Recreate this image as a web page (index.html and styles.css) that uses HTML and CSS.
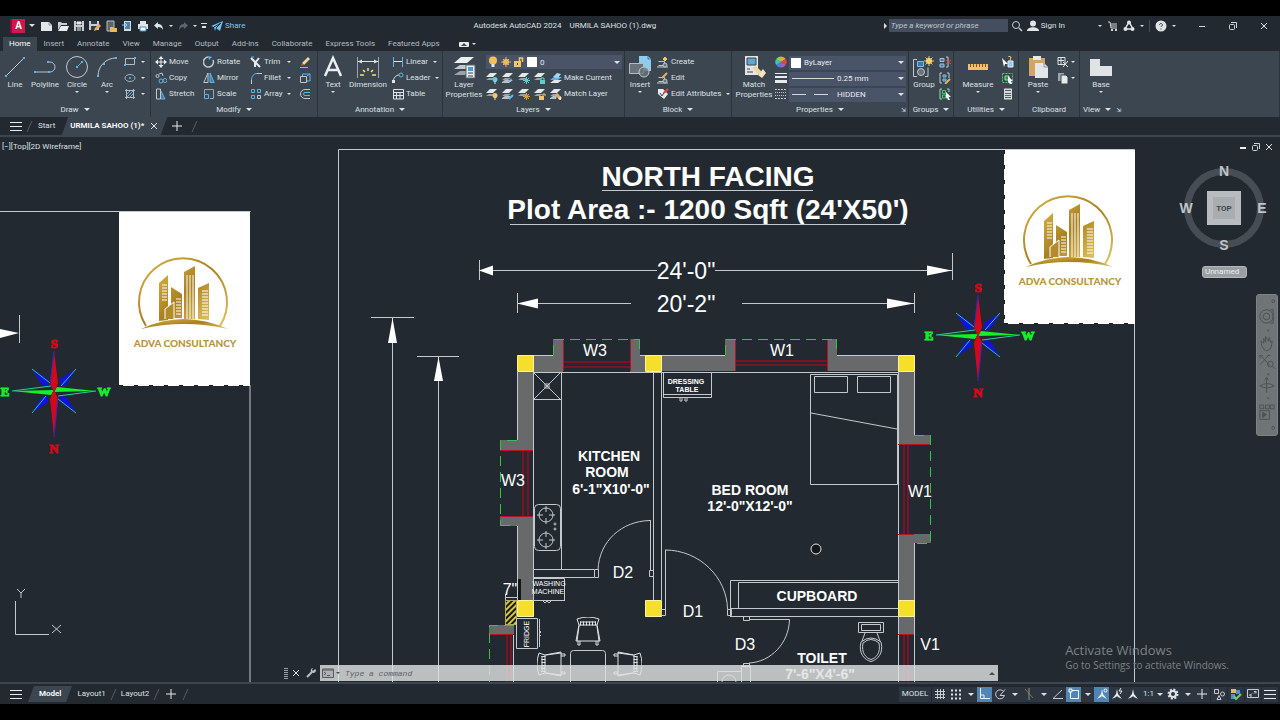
FILE: index.html
```html
<!DOCTYPE html>
<html lang="en">
<head>
    <meta charset="UTF-8">
    <meta name="viewport" content="width=device-width, initial-scale=1.0">
    <title>Autodesk AutoCAD 2024 - URMILA SAHOO (1).dwg</title>
    <link rel="stylesheet" href="styles.css">
</head>
<body>

    <!-- Icon sprite -->
    <svg class="sprite" aria-hidden="true">
        <defs>
            <linearGradient id="gold" x1="0" y1="0" x2="1" y2="1">
                <stop offset="0" stop-color="#d9b84f"/>
                <stop offset="0.5" stop-color="#a9801f"/>
                <stop offset="1" stop-color="#e0c460"/>
            </linearGradient>
            <pattern id="hatch" width="4" height="4" patternUnits="userSpaceOnUse" patternTransform="rotate(-45)">
                <rect width="4" height="4" fill="#15181a"/>
                <rect width="4" height="2" fill="#d9c433"/>
            </pattern>

            <!-- quick access -->
            <symbol id="q-new" viewBox="0 0 12 12"><path d="M0 2h8l3 3v6H0z" fill="#e3e6e8"/><path d="M8 2v3h3" fill="none" stroke="#8c959c"/></symbol>
            <symbol id="q-open" viewBox="0 0 12 12"><path d="M1 10V2h3l1 1h5v2H4z" fill="#c9ced2"/><path d="M1 11l3-5h8l-2 5z" fill="#e9ecee"/></symbol>
            <symbol id="q-save" viewBox="0 0 12 12"><path d="M1 1h10v10H1z" fill="#c9ced2"/><path d="M3 1h6v4H3zM3 7h6v4H3z" fill="#323a42"/><path d="M4 2h4v2H4zM4 8h4M4 10h4" fill="#e9ecee" stroke="#e9ecee"/></symbol>
            <symbol id="q-saveas" viewBox="0 0 12 12"><path d="M0 1h10v9H0z" fill="#c9ced2"/><path d="M2 1h6v3H2zM2 6h6v4H2z" fill="#323a42"/><path d="M5 11l1-3 4-4 2 2-4 4z" fill="#e6b060"/><path d="M10 4l2 2" stroke="#e0473d"/></symbol>
            <symbol id="q-web" viewBox="0 0 12 12"><path d="M2 1h7v10H2z" fill="#5a646d" stroke="#b8bfc4"/><path d="M5 7h3l1 1h3v4H5z" fill="#e8b95c"/></symbol>
            <symbol id="q-mobile" viewBox="0 0 12 12"><path d="M3 1h7v10H3z" fill="#d6dadd"/><path d="M4 2h5v7H4z" fill="#4c82a6"/><path d="M1 5h4M4 3l2 2-2 2" fill="none" stroke="#8fd0f5"/></symbol>
            <symbol id="q-print" viewBox="0 0 12 12"><path d="M3 1h6v3H3zM1 4h10v5H1z" fill="#e3e6e8"/><path d="M3 7h6v4H3z" fill="#fff" stroke="#3f8cc0"/></symbol>
            <symbol id="q-undo" viewBox="0 0 12 12"><path d="M5 2L1 5.500l4 3.500V7c3 0 4 1 5 3 0-4-2-6-5-6z" fill="#dfe3e6"/></symbol>
            <symbol id="q-redo" viewBox="0 0 12 12"><path d="M7 2l4 3.500L7 9V7c-3 0-4 1-5 3 0-4 2-6 5-6z" fill="#5c666f"/></symbol>
            <symbol id="q-share" viewBox="0 0 12 12"><path d="M0 6l12-5-3 10-4-3-1 3-1-4z" fill="#6ec1ef"/><path d="M3 7l7-4-5 5" fill="none" stroke="#20303c"/></symbol>
            <symbol id="t-search" viewBox="0 0 12 12"><circle cx="5" cy="5" r="3.500" fill="none" stroke="#c6ccd0"/><path d="M8 8l3 3" stroke="#c6ccd0" stroke-width="1.500"/></symbol>
            <symbol id="t-user" viewBox="0 0 12 12"><circle cx="6" cy="3.500" r="3" fill="#e0e4e6"/><path d="M0 11c0-5 12-5 12 0z" fill="#e0e4e6"/></symbol>
            <symbol id="t-cart" viewBox="0 0 12 12"><path d="M1 2h2l1 6h6M4 4h6M4 6h6" fill="none" stroke="#cfd4d8"/><path d="M4 10h2M8 10h2" stroke="#cfd4d8" stroke-width="2"/></symbol>
            <symbol id="t-app" viewBox="0 0 12 12"><path d="M6 2L2 9h8z" fill="none" stroke="#e0e4e6" stroke-width="1.500"/><circle cx="6" cy="2.500" r="2" fill="#e0e4e6"/><circle cx="2.500" cy="9" r="2" fill="#e0e4e6"/><circle cx="9.500" cy="9" r="2" fill="#e0e4e6"/></symbol>
            <symbol id="t-help" viewBox="0 0 12 12"><circle cx="6" cy="6" r="5.500" fill="#e0e4e6"/><path d="M4.500 5c0-2 3-2 3 0 0 1-1.500 1-1.500 2M6 8.500v1" fill="none" stroke="#2a3138"/></symbol>
            <symbol id="w-min" viewBox="0 0 12 12"><path d="M3 6.500h6" stroke="#cfd4d8"/></symbol>
            <symbol id="d-min" viewBox="0 0 12 12"><path d="M3 7h6" stroke="#eceff0" stroke-width="2"/></symbol>
            <symbol id="w-max" viewBox="0 0 12 12"><rect x="2.500" y="4.500" width="5" height="5" rx="1" fill="none" stroke="#cfd4d8"/><path d="M4 2.500h5.500V8" fill="none" stroke="#cfd4d8"/></symbol>
            <symbol id="w-close" viewBox="0 0 12 12"><path d="M3 3l6 6M9 3l-6 6" stroke="#dfe3e6"/></symbol>

            <!-- draw -->
            <symbol id="i-line" viewBox="0 0 24 24"><path d="M3 21L21 3" stroke="#c2c8cd"/><path d="M2 20h2v2H2zM20 2h2v2h-2z" fill="#5fb4e5"/></symbol>
            <symbol id="i-pline" viewBox="0 0 24 24"><path d="M2 17h15a5 5 0 000-10h-2" fill="none" stroke="#b4c3ce"/><path d="M1 16h2v2H1zM15 16h2v2h-2zM14 6h2v2h-2z" fill="#5fb4e5"/></symbol>
            <symbol id="i-circle" viewBox="0 0 24 24"><circle cx="12" cy="12" r="10.500" fill="none" stroke="#c2c8cd"/><path d="M12 12l5-5" stroke="#5fb4e5"/><path d="M11 11h2v2h-2zM16 6h2v2h-2z" fill="#5fb4e5"/></symbol>
            <symbol id="i-arc" viewBox="0 0 24 24"><path d="M3 21C3 11 11 3 21 3" fill="none" stroke="#c2c8cd"/><path d="M2 20h2v2H2zM8 8h2v2H8zM20 2h2v2h-2z" fill="#5fb4e5"/></symbol>
            <symbol id="i-rect" viewBox="0 0 12 12"><path d="M1.500 2.500h9v6h-9z" fill="none" stroke="#b4bcc2"/><path d="M0 8h2v2H0zM10 1h2v2h-2z" fill="#5fb4e5"/></symbol>
            <symbol id="i-ellipse" viewBox="0 0 12 12"><ellipse cx="6" cy="6" rx="5" ry="3.500" fill="none" stroke="#9db4c4"/><circle cx="6" cy="6" r="1" fill="#5fb4e5"/></symbol>
            <symbol id="i-hatch" viewBox="0 0 12 12"><path d="M2.500 1v10M9.500 1v10M1 2.500h10M1 9.500h10" stroke="#b4bcc2"/><path d="M3 6l3-3M3 9l6-6M6 9l3-3" stroke="#5fb4e5"/></symbol>

            <!-- modify -->
            <symbol id="i-move" viewBox="0 0 12 12"><path d="M6 1v10M1 6h10" stroke="#e8ebed"/><path d="M6 0l2.500 3h-5zM6 12l2.500-3h-5zM0 6l3-2.500v5zM12 6L9 3.500v5z" fill="#e8ebed"/></symbol>
            <symbol id="i-rotate" viewBox="0 0 12 12"><path d="M10 4a5 5 0 11-5-3" fill="none" stroke="#c2c8cd" stroke-width="1.500"/><path d="M5 0l4 1-3 3z" fill="#5fb4e5"/></symbol>
            <symbol id="i-trim" viewBox="0 0 12 12"><path d="M1 2l9 9M9 2L5 7v4" stroke="#e8ebed" stroke-width="2" fill="none"/><path d="M1 1h3" stroke="#5fb4e5"/></symbol>
            <symbol id="i-copy" viewBox="0 0 12 12"><circle cx="2.500" cy="4" r="1.500" fill="none" stroke="#c2c8cd"/><path d="M4 2l3-1 1 3" fill="none" stroke="#c2c8cd"/><circle cx="6" cy="9" r="2" fill="none" stroke="#5fb4e5"/><circle cx="10" cy="8.500" r="2" fill="none" stroke="#5fb4e5"/></symbol>
            <symbol id="i-mirror" viewBox="0 0 12 12"><path d="M5 1v9.500H.8z" fill="none" stroke="#c2c8cd"/><path d="M7 1v9.500h4.200z" fill="#447fa6" stroke="#5fb4e5"/></symbol>
            <symbol id="i-fillet" viewBox="0 0 12 12"><path d="M1.500 12V8M7 1.500h5" stroke="#c2c8cd"/><path d="M1.500 8C1.500 4 4 1.500 7 1.500" fill="none" stroke="#5fb4e5"/></symbol>
            <symbol id="i-stretch" viewBox="0 0 12 12"><path d="M1.500 1v10h4V1z" fill="none" stroke="#c2c8cd"/><path d="M6 3l4 8H6" fill="#447fa6" stroke="#5fb4e5"/></symbol>
            <symbol id="i-scale" viewBox="0 0 12 12"><path d="M1.500 6V1.500h9v9H7" fill="none" stroke="#9aa5ad"/><path d="M1.500 6.500h4v4h-4z" fill="none" stroke="#5fb4e5"/></symbol>
            <symbol id="i-array" viewBox="0 0 12 12"><path d="M1.500 1.500h3v3h-3zM7.500 1.500h3v3h-3zM1.500 7.500h3v3h-3z" fill="none" stroke="#5fb4e5"/><path d="M7.500 7.500h3v3h-3z" fill="none" stroke="#c2c8cd"/></symbol>
            <symbol id="i-erase" viewBox="0 0 12 12"><path d="M3 7l6-6 2 2-6 6z" fill="#f0d9a0"/><path d="M3 7l2 2-3 1z" fill="#e0473d"/><path d="M1 11.500h8" stroke="#e2a74c"/></symbol>
            <symbol id="i-explode" viewBox="0 0 12 12"><path d="M1.500 4.500h6v6h-6z" fill="none" stroke="#c2c8cd"/><path d="M3.500 4V2h7.500v7H8M8 4l3-2" fill="none" stroke="#5fb4e5"/></symbol>
            <symbol id="i-offset" viewBox="0 0 12 12"><path d="M11 1.500H6a4.500 4.500 0 000 9h5" fill="none" stroke="#c2c8cd"/><path d="M11 4.500H6a1.500 1.500 0 000 3h5" fill="none" stroke="#5fb4e5"/></symbol>

            <!-- annotation -->
            <symbol id="i-text" viewBox="0 0 24 24"><path d="M4 21L12 3l8 18M7 15h10" fill="none" stroke="#eceff0" stroke-width="2.500"/></symbol>
            <symbol id="i-dim" viewBox="0 0 24 24"><path d="M1.500 2v21M22.500 2v21" stroke="#9aa5ad"/><path d="M2 6.500h20" stroke="#dfe3e6"/><path d="M2 6.500l4-2v4zM22 6.500l-4-2v4z" fill="#dfe3e6"/><path d="M12 13v3M7 15l2 2M17 15l-2 2M4 20h4M16 20h4" stroke="#f5e36b" stroke-width="1.500"/></symbol>
            <symbol id="i-linear" viewBox="0 0 12 12"><path d="M1.500 1v10M10.500 1v10" stroke="#5fb4e5"/><path d="M2 5.500h8" stroke="#dfe3e6"/></symbol>
            <symbol id="i-leader" viewBox="0 0 12 12"><path d="M1 11C1 6 4 3 7 3" fill="none" stroke="#dfe3e6"/><circle cx="9" cy="3" r="2" fill="none" stroke="#5fb4e5"/><path d="M0 8h3v3H0z" fill="#dfe3e6"/></symbol>
            <symbol id="i-table" viewBox="0 0 12 12"><path d="M1.500 1.500h10v9.500h-10zM1 4.500h10M1 7.500h10M4.500 4v7M8 4v7" fill="none" stroke="#dfe3e6"/></symbol>

            <!-- layers -->
            <symbol id="i-layers" viewBox="0 0 24 24"><path d="M2 20l6-4h10l-5 4z" fill="#9ba3a9"/><path d="M2 14l6-4h12l-6 4z" fill="#c3c9cd"/><path d="M2 8l7-6h13l-7 6z" fill="#eceff0"/><path d="M14 10h9v13h-9z" fill="#e8ebed" stroke="#596672"/><path d="M16 12h5v4h-5z" fill="#4f9ccc"/><path d="M16 18h5M16 21h5" stroke="#39434d"/></symbol>
            <symbol id="l-base" viewBox="0 0 12 12"><path d="M0 8l3-2h6L6 8z" fill="#9ba3a9"/><path d="M0 5l4-4h7L7 5z" fill="#e4e8ea"/></symbol>
            <symbol id="l-off" viewBox="0 0 12 12"><use href="#l-base"/><circle cx="9" cy="7.500" r="2.500" fill="#5fd0e0"/><path d="M9 9v3" stroke="#dfe3e6"/></symbol>
            <symbol id="l-iso" viewBox="0 0 12 12"><use href="#l-base"/><path d="M0 10l3-2h8L7 11H0z" fill="#b9c0c5"/><path d="M6 9l4-2" stroke="#5fb4e5"/></symbol>
            <symbol id="l-freeze" viewBox="0 0 12 12"><use href="#l-base"/><path d="M8.500 5v7M5 8.500h7M6 6l5 5M11 6l-5 5" stroke="#5fd0c8"/></symbol>
            <symbol id="l-lock" viewBox="0 0 12 12"><use href="#l-base"/><path d="M6 8h5v4H6z" fill="#5fd0c8"/><path d="M7 8V6h3v2" fill="none" stroke="#5fd0c8"/></symbol>
            <symbol id="l-cur" viewBox="0 0 12 12"><path d="M0 11l4-3h8l-4 3z" fill="#e4e8ea"/><path d="M0 8l4-3h8L8 8z" fill="#5fb4e5"/><path d="M3 5l4-4 4 1-3 4z" fill="#a9d6f2"/></symbol>
            <symbol id="l-on" viewBox="0 0 12 12"><use href="#l-base"/><circle cx="9" cy="7.500" r="2.500" fill="#f2c866"/><path d="M9 9v3" stroke="#dfe3e6"/></symbol>
            <symbol id="l-uniso" viewBox="0 0 12 12"><use href="#l-base"/><path d="M0 10l3-2h8L7 11H0z" fill="#b9c0c5"/><path d="M7 11l4-4" stroke="#5fb4e5" stroke-width="2"/></symbol>
            <symbol id="l-thaw" viewBox="0 0 12 12"><use href="#l-base"/><circle cx="8.500" cy="8.500" r="2" fill="#f2c866"/><path d="M8.500 5v7M5 8.500h7M6 6l5 5M11 6l-5 5" stroke="#d99f3c"/></symbol>
            <symbol id="l-unlock" viewBox="0 0 12 12"><use href="#l-base"/><path d="M5 8h5v4H5z" fill="#f2c866"/><path d="M9 8V6h2v2" fill="none" stroke="#f2c866"/></symbol>
            <symbol id="l-match" viewBox="0 0 12 12"><use href="#l-base"/><path d="M0 10l3-2h4l-1 3H0z" fill="#b9c0c5"/><path d="M6 6l5 5" stroke="#e6b060" stroke-width="3"/><path d="M8 11l3 1V8z" fill="#eceff0"/></symbol>
            <symbol id="c-bulb" viewBox="0 0 12 12"><circle cx="6" cy="4.500" r="4" fill="#f4c05e"/><path d="M4.500 8h3v3h-3z" fill="#e3e6e8"/></symbol>
            <symbol id="c-sun" viewBox="0 0 12 12"><circle cx="6" cy="6" r="3" fill="#f4c05e"/><path d="M6 1v10M1 6h10M3 3l6 6M9 3l-6 6" stroke="#e7b75e"/></symbol>
            <symbol id="c-lock" viewBox="0 0 12 12"><path d="M1 5h7v6H1z" fill="#f2c866"/><path d="M6.500 5V2h3v4" fill="none" stroke="#f2c866" stroke-width="1.500"/><path d="M4 7h1v2H4z" fill="#3b4650"/></symbol>

            <!-- block / properties -->
            <symbol id="i-insert" viewBox="0 0 24 24"><path d="M11 1h9l3 3v12H11z" fill="#8fcbee"/><path d="M20 1v3h3" fill="none" stroke="#3f7ba1"/><path d="M1.500 8.500h14v10h-14z" fill="#69737c" stroke="#b4bcc2"/><circle cx="16" cy="17" r="5" fill="#69737c" fill-opacity=".8" stroke="#c2c8cd"/></symbol>
            <symbol id="b-create" viewBox="0 0 12 12"><path d="M1.500 5.500h6v4h-6M0 11h11" fill="none" stroke="#c2c8cd"/><circle cx="8" cy="9" r="2" fill="#69737c" stroke="#c2c8cd"/><path d="M8 1v4M6 3h4" stroke="#f2c866" stroke-width="2"/></symbol>
            <symbol id="b-edit" viewBox="0 0 12 12"><path d="M1.500 5.500h6v4h-6M0 11h11" fill="none" stroke="#c2c8cd"/><circle cx="8" cy="9" r="2" fill="#69737c" stroke="#c2c8cd"/><path d="M5 6l5-5" stroke="#e6b060" stroke-width="2"/></symbol>
            <symbol id="b-attr" viewBox="0 0 12 12"><path d="M1 1h5l5 5-4 5-6-5z" fill="#e8ebed"/><path d="M3 5l2 3 3-5" fill="none" stroke="#39434d"/><path d="M7 5l4-4" stroke="#e0473d" stroke-width="2"/></symbol>
            <symbol id="i-match" viewBox="0 0 24 24"><path d="M3 1h13v19H3z" fill="#e3e6e8"/><path d="M5 3h9v7H5z" fill="#5fa6d2" stroke="#39434d"/><path d="M5 14h3M5 17h6" stroke="#39434d"/><path d="M12 12l6 6" stroke="#f0d69a" stroke-width="4"/><path d="M16 20l5-6 3 4-4 5z" fill="#f4e6c3"/></symbol>
            <symbol id="p-color" viewBox="0 0 12 12"><path d="M6 6V.5A5.500 5.500 0 0110.800 3z" fill="#f0a23c"/><path d="M6 6l4.800-3a5.500 5.500 0 010 6z" fill="#e0473d"/><path d="M6 6l4.800 3A5.500 5.500 0 016 11.500z" fill="#b256c4"/><path d="M6 6v5.500A5.500 5.500 0 011.200 9z" fill="#4d7fe0"/><path d="M6 6L1.200 9a5.500 5.500 0 010-6z" fill="#3fc4b4"/><path d="M6 6L1.200 3A5.500 5.500 0 016 .5z" fill="#8ed052"/></symbol>
            <symbol id="p-lw" viewBox="0 0 12 12"><path d="M0 1.500h12" stroke="#e8ebed"/><path d="M0 5h12" stroke="#e8ebed" stroke-width="2"/><path d="M0 9.500h12" stroke="#e8ebed" stroke-width="3"/></symbol>
            <symbol id="p-lt" viewBox="0 0 12 12"><path d="M0 1.500h12M0 10.500h12" stroke="#c2c8cd" stroke-dasharray="2 1"/><path d="M0 4.500h12M0 7.500h12" stroke="#c2c8cd" stroke-dasharray="1 1"/></symbol>

            <!-- groups / utilities / clipboard / view -->
            <symbol id="i-group" viewBox="0 0 24 24"><path d="M5 4.500H1.500v17H5M13 21.500h3v-9" fill="none" stroke="#c2c8cd"/><path d="M5.500 6.500h6v5h-6z" fill="#3c7db0" stroke="#78bfe8"/><circle cx="9" cy="17" r="3.500" fill="#69737c" stroke="#c2c8cd"/><circle cx="17" cy="6" r="3" fill="#ffe08c"/><path d="M17 1v10M12 6h10M13.500 2.500l7 7M20.500 2.500l-7 7" stroke="#f2c866"/></symbol>
            <symbol id="g-un" viewBox="0 0 12 12"><path d="M1 2.500h4v3H1zM1 8h4v3H1z" fill="#3c7db0" stroke="#a9bfcd"/><path d="M7 1h2v10H7" fill="none" stroke="#c2c8cd"/><path d="M7 4l5 4M12 4L7 8" stroke="#e0473d"/></symbol>
            <symbol id="g-edit" viewBox="0 0 12 12"><path d="M3 1H1v10h2M8 1h2v5" fill="none" stroke="#c2c8cd"/><path d="M4 3h3v2H4zM4 7h3v2H4z" fill="#3c7db0" stroke="#78bfe8"/><path d="M6 12l5-5" stroke="#e6b060" stroke-width="2"/></symbol>
            <symbol id="g-sel" viewBox="0 0 12 12"><path d="M3 1H1v10h2M8 1h2v3" fill="none" stroke="#8fe0a2"/><path d="M3.500 2.500h3v3h-3zM3.500 7h3v3h-3z" fill="none" stroke="#4cc76c"/><path d="M7 4l5 5H9.500L11 12H9L8 9.500 7 11z" fill="#fff"/></symbol>
            <symbol id="i-measure" viewBox="0 0 24 24"><path d="M2 9h20v6H2z" fill="#f0c368"/><path d="M4.500 9v3M7.500 9v3M10.500 9v3M13.500 9v3M16.500 9v3M19.500 9v3" stroke="#765a22"/></symbol>
            <symbol id="u-quick" viewBox="0 0 12 12"><path d="M6 5h5v6H6z" fill="#8fcbee" stroke="#e8ebed"/><path d="M0 2l6 6H3l-1 3z" fill="#fff"/><path d="M6 0l3 1-1 4" stroke="#f2c866" fill="none"/></symbol>
            <symbol id="u-selall" viewBox="0 0 12 12"><path d="M.5 1.500h10v9H.5z" fill="none" stroke="#4cc76c" stroke-dasharray="2 1"/><path d="M3 4h4v4H3z" fill="#2f8f4b" stroke="#8fe0a2"/><path d="M6 4l5 5H9l1 3H8L6 10z" fill="#fff"/></symbol>
            <symbol id="u-calc" viewBox="0 0 12 12"><path d="M2 .5h8v11H2z" fill="#d6dadd"/><path d="M3 2.500h6M3 5.500h6M3 7.500h6M3 9.500h6" stroke="#56616b"/></symbol>
            <symbol id="i-paste" viewBox="0 0 24 24"><path d="M3 3h16v18H3z" fill="#d3a562"/><path d="M7 1h8v4H7z" fill="#e8ebed"/><path d="M9 8h9l4 4v11H9z" fill="#e3e6e8"/><path d="M18 8v4h4" fill="none" stroke="#8c959c"/></symbol>
            <symbol id="k-cut" viewBox="0 0 12 12"><path d="M1 1.500h7v7H1zM1 4.500h6M4 2v6" fill="none" stroke="#dfe3e6"/><path d="M6 6l5 5M11 5l-5 6" stroke="#dfe3e6"/></symbol>
            <symbol id="k-copy" viewBox="0 0 12 12"><path d="M1 1h6v8H1z" fill="#9aa5ad"/><path d="M4 3h5l2 2v7H4z" fill="#e8ebed" stroke="#39434d"/></symbol>
            <symbol id="i-base" viewBox="0 0 24 24"><path d="M1 4h10v7h12v10H1z" fill="#dfe3e6"/></symbol>

            <!-- status bar -->
            <symbol id="s-grid" viewBox="0 0 12 12"><path d="M3.500 1v10M6.500 1v10M9.500 1v10M1 3.500h10M1 6.500h10M1 9.500h10" stroke="#c6ccd0"/></symbol>
            <symbol id="s-snap" viewBox="0 0 12 12"><path d="M1 2.500h10M1 6.500h10M1 10.500h10" stroke="#e0e4e6" stroke-width="2" stroke-dasharray="2 2"/></symbol>
            <symbol id="s-ortho" viewBox="0 0 12 12"><path d="M1.500 0v10.500H11" fill="none" stroke="#e8f2fa"/><path d="M2 7h3v3" fill="none" stroke="#e8f2fa"/></symbol>
            <symbol id="s-polar" viewBox="0 0 12 12"><path d="M10 4a4.500 4.500 0 10.500 3.500H6l5-6" fill="none" stroke="#c6ccd0"/></symbol>
            <symbol id="s-iso" viewBox="0 0 12 12"><path d="M2 1l8 9" stroke="#a45a5a"/><path d="M6 0v12" stroke="#6ea577"/></symbol>
            <symbol id="s-track" viewBox="0 0 12 12"><path d="M10 2L1 10.500h10" fill="none" stroke="#c6ccd0"/></symbol>
            <symbol id="s-osnap" viewBox="0 0 12 12"><path d="M2.500 2.500h8v8h-8z" fill="none" stroke="#fff"/><path d="M1 1h3v3H1z" fill="#5a93c4" stroke="#fff"/></symbol>
            <symbol id="s-ann" viewBox="0 0 12 12"><path d="M6 1l1 5 4 5-4-2-1-1-1 1-4 2 4-5z" fill="#e8ebed"/></symbol>
            <symbol id="s-annvis" viewBox="0 0 12 12"><use href="#s-ann"/><circle cx="9.500" cy="2.500" r="1.500" fill="none" stroke="#fff"/></symbol>
            <symbol id="s-annauto" viewBox="0 0 12 12"><use href="#s-ann"/><path d="M10 0L8 3h3L9 6" fill="none" stroke="#e8ebed"/></symbol>
            <symbol id="s-gear" viewBox="0 0 12 12"><circle cx="6" cy="6" r="3" fill="none" stroke="#dfe3e6" stroke-width="2"/><circle cx="6" cy="6" r="4.500" fill="none" stroke="#dfe3e6" stroke-width="2" stroke-dasharray="2 1.500"/></symbol>
            <symbol id="s-plus" viewBox="0 0 12 12"><path d="M6 1v10M1 6h10" stroke="#e8ebed"/></symbol>
            <symbol id="s-shapes" viewBox="0 0 12 12"><path d="M1.500 1.500h4v4h-4zM4 11.500l2-4 2 4z" fill="none" stroke="#c6ccd0"/><circle cx="9.500" cy="6" r="2" fill="none" stroke="#c6ccd0"/></symbol>
            <symbol id="s-perf" viewBox="0 0 12 12"><path d="M1 1h5v4H1z" fill="#e8b95c"/><path d="M6 2h4v4H6zM1 6h4v5H1z" fill="#4d8fd0"/><path d="M4 8l2 3 5-5" fill="none" stroke="#6fd06a" stroke-width="2"/></symbol>
            <symbol id="s-full" viewBox="0 0 12 12"><path d="M.5 1.500h11v8H.5z" fill="none" stroke="#c6ccd0"/><path d="M3 7.500l2-2M7 5.500l2-2M3 6v2h2M7 3.500h2v2" fill="none" stroke="#c6ccd0"/></symbol>
            <symbol id="s-menu" viewBox="0 0 12 12"><path d="M0 2.500h12M0 6.500h12M0 10.500h12" stroke="#e8ebed" stroke-width="1"/></symbol>

            <!-- company logo on the title sheet -->
            <symbol id="adva" viewBox="0 0 131 174">
                <rect width="131" height="174" fill="#fff"/>
                <path d="M27 114A44 44 0 1 1 101 114" fill="none" stroke="url(#gold)" stroke-width="2"/>
                <path d="M22 117Q64 97 109 117Q64 107 22 117z" fill="url(#gold)"/>
                <path d="M40 109V71l9-8v45zM52 106V75l11 7v24zM65 107V60l11-6v53zM79 107V76l11-5v37z" fill="url(#gold)"/>
                <path d="M68 63v44M71 63v44M74 63v44" stroke="#fff" stroke-width="1"/>
                <path d="M43 73h5M43 76h5M43 79h5M43 82h5M43 85h5M43 88h5M57 87h5M57 90h5M57 93h5M57 96h5M57 99h5M57 102h5M83 79h6M83 82h6M83 85h6M83 88h6M83 91h6M83 94h6M83 97h6M83 100h6M83 103h6" stroke="#fff"/>
                <path d="M46 107V97l9-7v17" fill="#b28b2c" stroke="#fff"/>
                <text x="66" y="135" class="logo-text" text-anchor="middle">ADVA CONSULTANCY</text>
            </symbol>
            <!-- compass rose -->
            <symbol id="rose" viewBox="-56 -60 112 120" overflow="visible">
                <path d="M-22-22l16 10-1 8-6-3zM22-22L6-12l1 8 6-3zM-22 22l16-11-1-7-6 3zM22 22L6 11l1-7 6 3z" fill="#1212e0"/>
                <path d="M-22-22L-4-8M22-22L7-5M-22 22L-8 5M22 22L4 8" stroke="#27c89a" fill="none"/>
                <path d="M-42 0L-3-5M42 0L4 5" stroke="#25d0a0" fill="none"/>
                <path d="M-42 0L0-1-3 4zM42 0L0 1l3-5z" fill="#12f02a"/>
                <path d="M0-40l4 32-4 10-4-10zM0 46l-4-38L0-2l4 10z" fill="#d4081d"/>
                <path d="M0-40l-4 34M0 46L4 6" stroke="#3a22c8" fill="none"/>
                <text x="0" y="-43" class="rose-red">S</text>
                <text x="0" y="62" class="rose-red">N</text>
                <text x="-49" y="5" class="rose-green">E</text>
                <text x="50" y="5" class="rose-green">W</text>
            </symbol>
            <symbol id="chair" viewBox="0 0 28 30">
                <path d="M3 2q11-4 22 0l-2 6H5zM5 8l-3 16h24L23 8M5 9l-2 15M23 9l2 15M4 24v4h2v-4M22 24v4h2v-4M6 5h16" fill="none" stroke="#dfe2e4"/>
                <path d="M6 6.500h16" stroke="#dfe2e4" stroke-width="4" stroke-dasharray="1 2"/>
            </symbol>
        </defs>
    </svg>

    <!-- Title bar -->
    <header class="titlebar">
        <div class="quick-access">
            <button class="app-button" aria-label="Application menu">A</button>
            <span class="caret"></span>
            <button aria-label="New"><svg><use href="#q-new"/></svg></button>
            <button aria-label="Open"><svg><use href="#q-open"/></svg></button>
            <button aria-label="Save"><svg><use href="#q-save"/></svg></button>
            <button aria-label="Save as"><svg><use href="#q-saveas"/></svg></button>
            <button aria-label="Open from web"><svg><use href="#q-web"/></svg></button>
            <button aria-label="Save to mobile"><svg><use href="#q-mobile"/></svg></button>
            <button aria-label="Plot"><svg><use href="#q-print"/></svg></button>
            <button aria-label="Undo"><svg><use href="#q-undo"/></svg></button>
            <span class="caret small"></span>
            <button aria-label="Redo"><svg><use href="#q-redo"/></svg></button>
            <span class="caret small"></span>
            <span class="caret lined"></span>
            <button class="share"><svg><use href="#q-share"/></svg>Share</button>
        </div>
        <div class="app-title"><span>Autodesk AutoCAD 2024</span><span>URMILA SAHOO (1).dwg</span></div>
        <div class="title-right">
            <span class="caret right"></span>
            <input type="text" class="search" placeholder="Type a keyword or phrase" aria-label="Search">
            <button aria-label="Search"><svg><use href="#t-search"/></svg></button>
            <button class="sign-in"><svg><use href="#t-user"/></svg>Sign In</button>
            <span class="caret small"></span>
            <button aria-label="Store"><svg><use href="#t-cart"/></svg></button>
            <button aria-label="Autodesk apps"><svg><use href="#t-app"/></svg></button>
            <span class="caret small"></span>
            <span class="divider"></span>
            <button aria-label="Help"><svg><use href="#t-help"/></svg></button>
            <span class="caret small"></span>
            <div class="window-buttons">
                <button aria-label="Minimize"><svg><use href="#w-min"/></svg></button>
                <button aria-label="Restore"><svg><use href="#w-max"/></svg></button>
                <button aria-label="Close"><svg><use href="#w-close"/></svg></button>
            </div>
        </div>
    </header>

    <!-- Ribbon tabs -->
    <nav class="ribbon-tabs">
        <a href="#" class="active">Home</a>
        <a href="#">Insert</a>
        <a href="#">Annotate</a>
        <a href="#">View</a>
        <a href="#">Manage</a>
        <a href="#">Output</a>
        <a href="#">Add-ins</a>
        <a href="#">Collaborate</a>
        <a href="#">Express Tools</a>
        <a href="#">Featured Apps</a>
        <button class="ribbon-toggle" aria-label="Minimize ribbon"><i><span class="caret up dark"></span></i><span class="caret small"></span></button>
    </nav>

    <!-- Ribbon panels -->
    <section class="ribbon">
        <div class="panel">
            <div class="tools">
                <button class="big w28"><svg><use href="#i-line"/></svg>Line</button>
                <button class="big w32"><svg><use href="#i-pline"/></svg>Polyline</button>
                <button class="big w32"><svg><use href="#i-circle"/></svg>Circle<span class="caret small"></span></button>
                <button class="big w28"><svg><use href="#i-arc"/></svg>Arc<span class="caret small"></span></button>
                <div class="stack">
                    <button aria-label="Rectangle"><svg><use href="#i-rect"/></svg><span class="caret small"></span></button>
                    <button aria-label="Ellipse"><svg><use href="#i-ellipse"/></svg><span class="caret small"></span></button>
                    <button aria-label="Hatch"><svg><use href="#i-hatch"/></svg><span class="caret small"></span></button>
                </div>
            </div>
            <div class="panel-title">Draw<span class="caret"></span></div>
        </div>

        <div class="panel">
            <div class="tools modify">
                <div class="stack">
                    <button><svg><use href="#i-move"/></svg>Move</button>
                    <button><svg><use href="#i-copy"/></svg>Copy</button>
                    <button><svg><use href="#i-stretch"/></svg>Stretch</button>
                </div>
                <div class="stack">
                    <button><svg><use href="#i-rotate"/></svg>Rotate</button>
                    <button><svg><use href="#i-mirror"/></svg>Mirror</button>
                    <button><svg><use href="#i-scale"/></svg>Scale</button>
                </div>
                <div class="stack spread">
                    <button><svg><use href="#i-trim"/></svg>Trim<span class="caret small"></span></button>
                    <button><svg><use href="#i-fillet"/></svg>Fillet<span class="caret small"></span></button>
                    <button><svg><use href="#i-array"/></svg>Array<span class="caret small"></span></button>
                </div>
                <div class="stack">
                    <button aria-label="Erase"><svg><use href="#i-erase"/></svg></button>
                    <button aria-label="Explode"><svg><use href="#i-explode"/></svg></button>
                    <button aria-label="Offset"><svg><use href="#i-offset"/></svg></button>
                </div>
            </div>
            <div class="panel-title">Modify<span class="caret"></span></div>
        </div>

        <div class="panel">
            <div class="tools">
                <button class="big w28"><svg><use href="#i-text"/></svg>Text<span class="caret small"></span></button>
                <button class="big w42"><svg><use href="#i-dim"/></svg>Dimension</button>
                <div class="stack">
                    <button><svg><use href="#i-linear"/></svg>Linear<span class="caret small"></span></button>
                    <button><svg><use href="#i-leader"/></svg>Leader<span class="caret small"></span></button>
                    <button><svg><use href="#i-table"/></svg>Table</button>
                </div>
            </div>
            <div class="panel-title">Annotation<span class="caret"></span></div>
        </div>

        <div class="panel">
            <div class="tools">
                <button class="big w40"><svg><use href="#i-layers"/></svg>Layer<br>Properties</button>
                <div class="stack grow">
                    <div class="combo">
                        <svg><use href="#c-bulb"/></svg><svg><use href="#c-sun"/></svg><svg><use href="#c-lock"/></svg><i class="swatch"></i>
                        <select aria-label="Layer"><option>0</option></select>
                        <span class="caret"></span>
                    </div>
                    <div class="icon-row">
                        <button aria-label="Off"><svg><use href="#l-off"/></svg></button>
                        <button aria-label="Isolate"><svg><use href="#l-iso"/></svg></button>
                        <button aria-label="Freeze"><svg><use href="#l-freeze"/></svg></button>
                        <button aria-label="Lock"><svg><use href="#l-lock"/></svg></button>
                        <button><svg><use href="#l-cur"/></svg>Make Current</button>
                    </div>
                    <div class="icon-row">
                        <button aria-label="Turn all on"><svg><use href="#l-on"/></svg></button>
                        <button aria-label="Unisolate"><svg><use href="#l-uniso"/></svg></button>
                        <button aria-label="Thaw all"><svg><use href="#l-thaw"/></svg></button>
                        <button aria-label="Unlock"><svg><use href="#l-unlock"/></svg></button>
                        <button><svg><use href="#l-match"/></svg>Match Layer</button>
                    </div>
                </div>
            </div>
            <div class="panel-title">Layers<span class="caret"></span></div>
        </div>

        <div class="panel">
            <div class="tools">
                <button class="big w28"><svg><use href="#i-insert"/></svg>Insert<span class="caret small"></span></button>
                <div class="stack">
                    <button><svg><use href="#b-create"/></svg>Create</button>
                    <button><svg><use href="#b-edit"/></svg>Edit</button>
                    <button><svg><use href="#b-attr"/></svg>Edit Attributes<span class="caret small"></span></button>
                </div>
            </div>
            <div class="panel-title">Block<span class="caret"></span></div>
        </div>

        <div class="panel">
            <div class="tools">
                <button class="big w42"><svg><use href="#i-match"/></svg>Match<br>Properties</button>
                <div class="stack grow props">
                    <div class="prop"><svg><use href="#p-color"/></svg>
                        <div class="combo"><i class="swatch"></i><select aria-label="Object color"><option>ByLayer</option></select><span class="caret"></span></div>
                    </div>
                    <div class="prop"><svg><use href="#p-lw"/></svg>
                        <div class="combo"><i class="stroke"></i><select aria-label="Lineweight"><option>0.25 mm</option></select><span class="caret"></span></div>
                    </div>
                    <div class="prop"><svg><use href="#p-lt"/></svg>
                        <div class="combo"><i class="stroke dashed"></i><select aria-label="Linetype"><option>HIDDEN</option></select><span class="caret"></span></div>
                    </div>
                </div>
            </div>
            <div class="panel-title">Properties<span class="caret"></span><span class="launcher">⇲</span></div>
        </div>

        <div class="panel">
            <div class="tools">
                <button class="big w28"><svg><use href="#i-group"/></svg>Group</button>
                <div class="stack flush">
                    <button aria-label="Ungroup"><svg><use href="#g-un"/></svg></button>
                    <button aria-label="Group edit"><svg><use href="#g-edit"/></svg></button>
                    <button aria-label="Group selection"><svg><use href="#g-sel"/></svg></button>
                </div>
            </div>
            <div class="panel-title">Groups<span class="caret"></span></div>
        </div>

        <div class="panel">
            <div class="tools">
                <button class="big w46"><svg><use href="#i-measure"/></svg>Measure<span class="caret small"></span></button>
                <div class="stack flush">
                    <button aria-label="Quick select"><svg><use href="#u-quick"/></svg></button>
                    <button aria-label="Select all"><svg><use href="#u-selall"/></svg></button>
                    <button aria-label="Calculator"><svg><use href="#u-calc"/></svg></button>
                </div>
            </div>
            <div class="panel-title">Utilities<span class="caret"></span></div>
        </div>

        <div class="panel">
            <div class="tools">
                <button class="big w36"><svg><use href="#i-paste"/></svg>Paste<span class="caret small"></span></button>
                <div class="stack flush">
                    <button aria-label="Cut"><svg><use href="#k-cut"/></svg><span class="caret small"></span></button>
                    <button aria-label="Copy clip"><svg><use href="#k-copy"/></svg><span class="caret small"></span></button>
                </div>
            </div>
            <div class="panel-title">Clipboard</div>
        </div>

        <div class="panel">
            <div class="tools">
                <button class="big w40"><svg><use href="#i-base"/></svg>Base<span class="caret small"></span></button>
            </div>
            <div class="panel-title left">View<span class="caret"></span><span class="launcher">⇲</span></div>
        </div>
    </section>

    <!-- Drawing tabs -->
    <nav class="file-tabs">
        <button class="menu" aria-label="Drawings"><svg><use href="#s-menu"/></svg></button>
        <span class="slash"></span>
        <a href="#" class="start">Start</a>
        <a href="#" class="slant active"><b>URMILA SAHOO (1)*</b><svg><use href="#w-close"/></svg></a>
        <button class="add" aria-label="New drawing"><svg><use href="#s-plus"/></svg></button>
        <span class="slash"></span>
    </nav>

    <!-- Model space -->
    <main class="canvas">
        <svg class="drawing" viewBox="0 137 1280 545" preserveAspectRatio="xMinYMin slice">
            <!-- sheets -->
            <g class="thin">
                <path d="M338.500 682V149.500H1134.500V682"/>
                <path d="M0 211.500H250.500M250 385V682" />
            </g>
            <use href="#adva" x="119" y="212" width="131" height="174"/>
            <use href="#adva" x="1004" y="150" width="131" height="174"/>
            <path d="M119 385.500H250M1004.500 150V324M1004 323.500H1134" stroke="#1a1f24" stroke-dasharray="4 11" fill="none"/>

            <use href="#rose" x="-2" y="331" width="112" height="120"/>
            <use href="#rose" x="922" y="275" width="112" height="120"/>

            <!-- heading -->
            <g class="heading">
                <text x="708" y="186">NORTH FACING</text>
                <text x="708" y="219">Plot Area :- 1200 Sqft (24'X50')</text>
            </g>
            <path class="thin" d="M602 190.500H813M510 224.500H906"/>

            <!-- dimensions -->
            <path class="thin" d="M479.500 260V280M479 270.500H657M715 270.500H952M952.500 253V280M517.500 293V313M517 303.500H631M742 303.500H914M914.500 293V313M371 317.500H414M392.500 318V682M417 356.500H459M438.500 357V682M19.500 315V343"/>
            <path fill="#fff" d="M479 270.500l14-5v10zM952 270.500l-25-5v10zM517 303.500l21-5v10zM914 303.500l-27-5v10zM392.500 318l-4.500 25h9zM438.500 357l-4.500 24h9zM19 333l-19-4v9z"/>
            <g class="dim">
                <text x="686" y="279">24'-0"</text>
                <text x="686" y="312">20'-2"</text>
            </g>

            <!-- walls -->
            <path fill="#68696a" d="M533 355.500H553V339H563V372H533zM630 339H640V355.500H645V372H630zM662 355.500H725V339H735V371H662zM827 339H837V355.500H898V371H827zM898 372H914V435H931V444H898zM898 534H931V543H914V600H898zM898 617H914V634H898zM517 372H533V450H500V440H517zM500 516H533V600H517V526H500zM489 625H514V634H489z"/>
            <path class="thin" d="M533 355.500H553M640 355.500H725M837 355.500H898M533 372.500H898M517.500 372V440M533.500 372V600M517.500 526V600M914.500 372V435M898.500 372V682M914.500 543V682M513.500 634V682M653.500 372V600M661.500 372V600"/>
            <path class="red" d="M563.500 339V371M630.500 339V371M735.500 339V371M827.500 339V371M898 444.500H931M898 534.500H914M500 450.500H533M500 516.500H533M489 634.500H514M898 634.500H914"/>
            <path class="darkred" d="M564 362H630M564 367H630M736 361H827M736 365H827M904 445V534M908 445V534M523 451V516M528 451V516M904 635V682M908 635V682M507 635V682M511 635V682"/>
            <path class="green" d="M553.500 355V339.500H640M639.500 339V355M725.500 355V339.500H837M836.500 339V355M914 435.500H931M930.500 435V543.500H914M517 440.500H500.500V526M500 525.500H517M514 625.500H489.500V682"/>
            <path fill="#f6df2b" stroke="#fbf3a0" d="M517.500 355.500h16v16h-16zM645.500 355.500h16v16h-16zM898.500 355.500h16v16h-16zM898.500 600.500h16v16h-16zM517.500 600.500h16v16h-16zM645.500 600.500h16v16h-16z"/>
            <rect x="505.500" y="600.500" width="11" height="24" fill="url(#hatch)" stroke="#b5ab5b"/>
            <path d="M518 579h3v21h-3z" fill="#15181a"/>

            <!-- kitchen -->
            <g class="thin">
                <path d="M533 399.500H561M561.500 372V569M534 373L560 399M560 373L534 399M533 569.500H594M533 577.500H594M594.500 569.500h4v8h-4zM650.500 520V570M649.500 570.500h4v6h-4zM598 570C599 541 622 521 650 520.500M505 597.500H518M505.500 594V600"/>
                <rect x="545" y="384" width="4" height="4"/>
                <rect x="534.500" y="504.500" width="26" height="46" rx="4"/>
                <circle cx="546" cy="515" r="7"/><circle cx="546" cy="540" r="7"/>
                <path d="M546 506V512M546 518V524M537 515H543M549 515H555M546 531V537M546 543V549M537 540H543M549 540H555"/>
                <circle cx="555" cy="524" r="1"/><circle cx="555" cy="529" r="1"/>
                <path d="M533.500 578.500H564.500V600M533 600.500H565M543 601l2 2 2-2 2 2 2-2M516.500 618.500H537.500V648.500H516.500zM539.500 619V647M539 630l2 2-2 2 2 2"/>
            </g>
            <!-- dining -->
            <rect class="thin" x="570.500" y="650.500" width="35" height="40" rx="3"/>
            <use href="#chair" x="574" y="617" width="28" height="30"/>
            <use href="#chair" x="538" y="649" width="28" height="30" transform="rotate(-90 552 664)"/>
            <use href="#chair" x="613" y="649" width="28" height="30" transform="rotate(90 627 664)"/>

            <!-- bedroom -->
            <g class="thin">
                <path d="M663.500 373V397.500H711.500V373M663 394.500H711M680 398v3h2v-3M685 398v3h2v-3M704 397.500h5"/>
                <path d="M810.500 484.500V374.500H897.500V484.500zM814.500 376.500h33v16h-33zM857.500 376.500h33v16h-33zM811 413L897 429"/>
                <path d="M665.500 615V550M661.500 609.500h4v6h-4zM665 550C700 550 727 578 727.500 609M727.500 609.500h4v6h-4z"/>
                <path d="M730.500 616.500V580.500H898M738.500 608V582.500H898M730 608.500H898M730 616.500H898"/>
            </g>
            <circle cx="816" cy="549" r="5" fill="#14171a" stroke="#dfe2e4"/>

            <!-- toilet -->
            <g class="thin">
                <path d="M743.500 616.500h6v4h-6zM749 619.500H789.500C789 643 771 662 749 663M743.500 663.500h6v3h-6zM741.500 666H750.500V682M741.500 666V682M717.500 682V671.500H741"/>
                <path d="M722 682a7 7 0 0114 0M858.500 622.500h25v10h-25zM861.500 624.500h19v6h-19zM865 633l-3 8M877 633l3 8"/>
                <path d="M861 642Q871 634 881 642C884 654 877 660 871 661.500C865 660 858 654 861 642zM863 643Q871 636 879 643C881 653 876 658 871 659.500C866 658 861 653 863 643z"/>
            </g>

            <!-- labels -->
            <g class="tag">
                <text x="595" y="356">W3</text>
                <text x="782" y="356">W1</text>
                <text x="513" y="486">W3</text>
                <text x="920" y="497">W1</text>
                <text x="623" y="578">D2</text>
                <text x="693" y="617">D1</text>
                <text x="745" y="650">D3</text>
                <text x="930" y="650">V1</text>
                <text x="510" y="595">7"</text>
            </g>
            <g class="room">
                <text x="609" y="461">KITCHEN</text>
                <text x="607" y="477">ROOM</text>
                <text x="611" y="494">6'-1"X10'-0"</text>
                <text x="750" y="495">BED ROOM</text>
                <text x="750" y="511">12'-0"X12'-0"</text>
                <text x="817" y="601">CUPBOARD</text>
                <text x="822" y="663">TOILET</text>
                <text x="820" y="679">7'-6"X4'-6"</text>
            </g>
            <g class="tiny">
                <text x="686" y="384"><tspan class="strong">DRESSING</tspan></text>
                <text x="687" y="392"><tspan class="strong">TABLE</tspan></text>
                <text x="549" y="586">WASHING</text>
                <text x="548" y="594">MACHINE</text>
                <text transform="translate(529 634) rotate(-90)">FRIDGE</text>
            </g>

            <!-- UCS icon -->
            <path class="thin" d="M15.500 601V634.500H49M17 589l4 4v5M25 589l-4 4M52 625l9 8M61 625l-9 8"/>
        </svg>

        <div class="view-label">[−][Top][2D Wireframe]</div>

        <div class="doc-buttons">
            <button aria-label="Minimize drawing"><svg><use href="#d-min"/></svg></button>
            <button aria-label="Restore drawing"><svg><use href="#w-max"/></svg></button>
            <button aria-label="Close drawing"><svg><use href="#w-close"/></svg></button>
        </div>

        <div class="viewcube">
            <span class="n">N</span>
            <span class="w">W</span>
            <button class="top">TOP</button>
            <span class="e">E</span>
            <span class="s">S</span>
        </div>
        <button class="ucs-name">Unnamed</button>

        <div class="navbar">
            <svg viewBox="0 0 21 142">
                <g fill="none" stroke="#4c5154">
                    <circle cx="17" cy="4" r="1.500"/>
                    <circle cx="10" cy="20" r="7"/><circle cx="10" cy="20" r="3.500"/><path d="M14 13h3v14h-3"/>
                    <path d="M5 50l-1-4 3 2V43l2 4V41l3 5 1-4 1 5 2-1-1 6q-1 4-5 4-3 0-5-5zM4 61l9 10M12 61L3 71M3 64v-3h3M14 61h-3"/>
                    <circle cx="14" cy="70" r="3"/><path d="M16 72l3 3M10 84V100M3 93q8-5 15 0-8 4-15 0M8 87l2-3 2 3"/>
                    <path d="M3 113h4v4H3zM9 113h4v4H9zM14 113h4v4h-4zM3 119h10v9H3z"/><path d="M6 121l4 2-4 3z" fill="#4c5154"/>
                    <circle cx="17" cy="137" r="1.500"/>
                </g>
                <path d="M10 34h3l-1 2zM10 80h3l-1 2zM10 105h3l-1 2z" fill="#4c5154"/>
            </svg>
        </div>

        <div class="activate">
            <p>Activate Windows</p>
            <p>Go to Settings to activate Windows.</p>
        </div>

        <div class="command">
            <span class="grip"></span>
            <button aria-label="Close command line"><svg><use href="#w-close"/></svg></button>
            <button aria-label="Customize"><svg viewBox="0 0 12 12"><path d="M2 10l5-5" stroke="#b9c0c5" stroke-width="2"/><path d="M10 2L8 4 7 3l1-2a3 3 0 00-2 4l2 1a3 3 0 003-3z" fill="#b9c0c5"/></svg></button>
            <label class="command-line">
                <svg viewBox="0 0 12 12"><path d="M.5 2h11v8.500H.5z" fill="#aeb2b4" stroke="#555b60"/><path d="M.5 3h11M2 5l2 1.500L2 8M5 8.500h3" fill="none" stroke="#555b60"/></svg>
                <span class="caret small dark"></span>
                <input type="text" placeholder="Type a command" aria-label="Command">
                <span class="caret up dark"></span>
            </label>
        </div>
    </main>

    <!-- Status bar -->
    <footer class="statusbar">
        <nav class="layout-tabs">
            <button class="menu" aria-label="Layouts"><svg><use href="#s-menu"/></svg></button>
            <a href="#" class="slant active"><b>Model</b></a>
            <a href="#">Layout1</a>
            <span class="slash"></span>
            <a href="#">Layout2</a>
            <span class="slash"></span>
            <button class="add" aria-label="New layout"><svg><use href="#s-plus"/></svg></button>
            <span class="slash"></span>
        </nav>
        <div class="status-tools">
            <button class="model">MODEL</button>
            <button aria-label="Grid"><svg><use href="#s-grid"/></svg></button>
            <button aria-label="Snap"><svg><use href="#s-snap"/></svg></button>
            <button class="drop" aria-label="Snap options"><span class="caret"></span></button>
            <button class="on" aria-label="Ortho"><svg><use href="#s-ortho"/></svg></button>
            <button aria-label="Polar"><svg><use href="#s-polar"/></svg></button>
            <button class="drop" aria-label="Polar options"><span class="caret"></span></button>
            <button aria-label="Isometric"><svg><use href="#s-iso"/></svg></button>
            <button class="drop" aria-label="Isometric options"><span class="caret"></span></button>
            <button aria-label="Object tracking"><svg><use href="#s-track"/></svg></button>
            <button class="on" aria-label="Object snap"><svg><use href="#s-osnap"/></svg></button>
            <button class="drop" aria-label="Object snap options"><span class="caret"></span></button>
            <button class="on" aria-label="Annotation visibility"><svg><use href="#s-annvis"/></svg></button>
            <button aria-label="Auto scale"><svg><use href="#s-annauto"/></svg></button>
            <button aria-label="Annotation scale"><svg><use href="#s-ann"/></svg></button>
            <button class="scale">1:1<span class="caret"></span></button>
            <button aria-label="Workspace"><svg><use href="#s-gear"/></svg></button>
            <button class="drop" aria-label="Workspace options"><span class="caret"></span></button>
            <button aria-label="Annotation monitor"><svg><use href="#s-plus"/></svg></button>
            <button class="wide" aria-label="Isolate objects"><svg><use href="#s-shapes"/></svg></button>
            <button class="wide" aria-label="Performance"><svg><use href="#s-perf"/></svg></button>
            <button class="wide" aria-label="Clean screen"><svg><use href="#s-full"/></svg></button>
            <button class="wide" aria-label="Customization"><svg><use href="#s-menu"/></svg></button>
        </div>
    </footer>

</body>
</html>
```
FILE: styles.css
```css
/* General Styling */
* {
    box-sizing: border-box;
}

body {
    margin: 0;
    min-height: 100vh;
    padding: 16px 0;
    background-color: #000000;
    color: #dde1e4;
    font-family: Roboto, "Open Sans", sans-serif;
    font-size: 8px;
    line-height: 10px;
    display: flex;
    flex-direction: column;
}

button {
    font: inherit;
    color: inherit;
    background: none;
    border: none;
    padding: 0;
    display: flex;
    align-items: center;
    cursor: pointer;
    white-space: nowrap;
}

a {
    color: inherit;
    text-decoration: none;
    white-space: nowrap;
}

svg {
    width: 12px;
    height: 12px;
    flex: none;
    display: block;
}

.sprite {
    position: absolute;
    width: 0;
    height: 0;
}

.caret {
    flex: none;
    width: 0;
    height: 0;
    border: 3px solid transparent;
    border-top-color: #dde1e4;
    border-bottom: none;
}

.caret.small {
    border-width: 2px;
    border-bottom: none;
}

.caret.right {
    border: 3px solid transparent;
    border-left-color: #dde1e4;
    border-right: none;
}

.caret.dark {
    border-top-color: #444b50;
}

.caret.up {
    border: 3px solid transparent;
    border-bottom-color: #444b50;
    border-top: none;
}

.caret.lined {
    width: 6px;
    height: 6px;
    border: none;
    border-top: 1px solid #dde1e4;
    background: linear-gradient(#dde1e4, #dde1e4) center 2px / 4px 2px no-repeat;
}

/* Title Bar */
.titlebar {
    height: 21px;
    padding-bottom: 2px;
    background-color: #222930;
    display: flex;
    align-items: center;
}

.quick-access {
    flex: 0 0 37%;
    padding-left: 10px;
    display: flex;
    align-items: center;
    gap: 4px;
}

.app-button {
    width: 15px;
    height: 14px;
    justify-content: center;
    background-color: #d4144b;
    border-left: 2px solid #8f0d33;
    color: #ffffff;
    font-size: 10px;
    font-weight: bold;
}

.app-button + .caret {
    margin-right: 2px;
}

.share {
    gap: 2px;
    color: #7cc6ef;
}

.app-title {
    display: flex;
    gap: 8px;
    white-space: nowrap;
}

.title-right {
    margin-left: auto;
    display: flex;
    align-items: center;
}

.search {
    width: 119px;
    height: 13px;
    margin: 0 3px 0 2px;
    padding: 0 2px;
    border: none;
    background-color: #454e5f;
    color: #dde1e4;
    font: italic 8px Roboto, sans-serif;
}

.search::placeholder {
    color: #bfc5cc;
    opacity: 1;
}

.sign-in {
    gap: 2px;
    margin: 0 28px 0 4px;
}

.title-right .caret.small {
    margin: 0 5px;
}

.title-right button + button {
    margin-left: 4px;
}

.divider {
    width: 1px;
    height: 12px;
    margin-right: 5px;
    background-color: #454e57;
}

.window-buttons {
    margin-left: 15px;
    padding-right: 10px;
    display: flex;
    gap: 15px;
}

/* Ribbon Tabs */
.ribbon-tabs {
    height: 14px;
    padding-left: 3px;
    background-color: #222930;
    color: #b4bbc1;
    display: flex;
}

.ribbon-tabs a {
    padding: 2px 6px 2px 7px;
}

.ribbon-tabs .active {
    padding: 2px 6px;
    background-color: #3b4650;
    color: #ffffff;
}

.ribbon-toggle {
    gap: 3px;
    margin-left: 13px;
}

.ribbon-toggle i {
    width: 10px;
    height: 5px;
    padding: 1px 2px;
    background-color: #e8ebed;
    border-radius: 1px;
    display: flex;
}

/* Ribbon */
.ribbon {
    background-color: #3b4650;
    display: grid;
    grid-template-columns: 151px 167px 125px 182px 107px 177px 45px 65px 61px 1fr;
}

.panel {
    padding-top: 3px;
    border-right: 1px solid #2a323a;
}

.tools {
    height: 48px;
    padding-left: 1px;
    display: flex;
}

.big {
    flex-direction: column;
    height: 48px;
    padding-top: 1px;
    text-align: center;
}

.big svg {
    width: 24px;
    height: 24px;
    margin-bottom: 1px;
}

.w28 { width: 28px; }
.w32 { width: 32px; }
.w36 { width: 36px; }
.w40 { width: 40px; }
.w42 { width: 42px; }
.w46 { width: 46px; }

.big .caret {
    margin-top: 1px;
}

.stack {
    margin-left: 3px;
    display: grid;
    grid-template-rows: 16px 16px 16px;
    align-content: start;
}

.stack button {
    gap: 2px;
}

.stack .caret {
    margin-left: 3px;
}

.stack.grow {
    flex: 1;
    margin-left: 2px;
    padding-right: 2px;
}

.stack.props {
    margin-left: 0;
}

.stack.flush {
    margin-left: 1px;
}

.stack.flush .caret {
    margin-left: 0;
}

.modify {
    display: grid;
    grid-template-columns: 48px 47px 49px 16px;
}

.spread .caret {
    margin-left: auto;
    margin-right: 5px;
}

.panel-title {
    position: relative;
    height: 15px;
    display: flex;
    justify-content: center;
    align-items: center;
    gap: 5px;
}

.panel-title.left {
    justify-content: flex-start;
    padding-left: 3px;
}

.launcher {
    font-size: 6px;
    font-family: "DejaVu Sans", sans-serif;
}

.panel-title:not(.left) .launcher {
    position: absolute;
    right: 2px;
}

.combo {
    flex: 1;
    height: 14px;
    margin-top: 1px;
    padding: 0 2px 0 1px;
    background-color: #4a5468;
    display: flex;
    align-items: center;
    gap: 1px;
}

.combo select {
    flex: 1;
    min-width: 0;
    height: 12px;
    padding: 0;
    border: none;
    background: none;
    color: #e8ebed;
    font: 8px Roboto, sans-serif;
    appearance: none;
    margin-left: 2px;
}

.combo .caret {
    margin: 0;
}

.swatch {
    width: 10px;
    height: 10px;
    margin-left: 1px;
    background-color: #ffffff;
}

.stroke {
    width: 42px;
    height: 1px;
    margin-left: 2px;
    background-color: #d5d9dd;
}

.stroke.dashed {
    background: repeating-linear-gradient(90deg, #d5d9dd 0 14px, transparent 14px 22px);
}

.icon-row {
    display: flex;
    gap: 4px;
}

.prop {
    display: flex;
    align-items: center;
    gap: 2px;
}

/* Drawing Tabs */
.file-tabs {
    height: 20px;
    padding-left: 10px;
    background-color: #222930;
    border-bottom: 2px solid #3b4650;
    display: flex;
    align-items: center;
}

.slash {
    width: 1px;
    height: 11px;
    background-color: #535d66;
    transform: skewX(-24deg);
}

.file-tabs .slash {
    margin-left: 7px;
}

.start {
    margin: 0 10px 0 8px;
}

.slant {
    position: relative;
    z-index: 0;
    display: flex;
    align-items: center;
    color: #ffffff;
}

.slant b {
    font-weight: 600;
}

.slant::before {
    content: "";
    position: absolute;
    inset: 0;
    z-index: -1;
    background-color: #3b4650;
    transform: skewX(-20deg);
}

.file-tabs .slant {
    height: 18px;
    padding: 0 4px 0 5px;
    gap: 4px;
}

.file-tabs .add {
    margin: 0 4px 0 7px;
}

/* Model Space */
.canvas {
    position: relative;
    flex: 1;
    min-height: 545px;
    overflow: hidden;
    background-color: #222930;
}

.drawing {
    position: absolute;
    inset: 0;
    width: 100%;
    height: 100%;
    font-family: "Liberation Sans", Arial, sans-serif;
    fill: #ffffff;
    text-anchor: middle;
}

.thin {
    fill: none;
    stroke: #c3c9cd;
    stroke-width: 1;
}

.red {
    fill: none;
    stroke: #b5122c;
}

.darkred {
    fill: none;
    stroke: #7d1226;
    stroke-width: 2;
}

.green {
    fill: none;
    stroke: #35c43e;
    stroke-dasharray: 10 6;
}

.heading { font-size: 28px; font-weight: bold; }
.dim { font-size: 23px; }
.tag { font-size: 16px; }
.room { font-size: 14px; font-weight: bold; }
.tiny { font-size: 7px; }
.strong { font-weight: bold; }

.logo-text {
    font: 900 10px Lato, sans-serif;
    fill: #b8943a;
}

.rose-red,
.rose-green {
    font: bold 13px "Liberation Serif", serif;
    text-anchor: middle;
    fill: #d4081d;
    stroke: #d4081d;
}

.rose-green {
    fill: #12f02a;
    stroke: #12f02a;
}

.view-label {
    position: absolute;
    top: 5px;
    left: 2px;
}

.doc-buttons {
    position: absolute;
    top: 4px;
    right: 5px;
    display: flex;
    gap: 1px;
}

.viewcube {
    position: absolute;
    top: 26px;
    right: 9px;
    width: 94px;
    height: 90px;
    display: grid;
    grid-template-columns: 18px 1fr 18px;
    grid-template-rows: 16px 1fr 16px;
    place-items: center;
    color: #c0c4c7;
    font: bold 14px "Liberation Sans", sans-serif;
}

.viewcube::before {
    content: "";
    position: absolute;
    inset: 5px 7px;
    border: 7px solid #464d54;
    border-radius: 50%;
}

.viewcube span,
.viewcube button {
    position: relative;
}

.viewcube .n { grid-area: 1 / 2; }
.viewcube .w { grid-area: 2 / 1; }
.viewcube .e { grid-area: 2 / 3; }
.viewcube .s { grid-area: 3 / 2; }

.viewcube .top {
    grid-area: 2 / 2;
    width: 34px;
    height: 34px;
    justify-content: center;
    background-color: #a9adaf;
    border: 6px solid #b9bcbe;
    color: #43484c;
    font: bold 8px Roboto, sans-serif;
}

.ucs-name {
    position: absolute;
    top: 129px;
    right: 33px;
    width: 45px;
    height: 12px;
    padding-left: 2px;
    background-color: #9a9fa3;
    border: 1px solid #b3b7ba;
    border-radius: 3px;
    color: #eceff0;
}

.navbar {
    position: absolute;
    top: 157px;
    right: 2px;
    width: 22px;
    height: 142px;
    background-color: #6f7476;
    border: 1px solid #7d8284;
    border-radius: 3px;
}

.navbar svg {
    width: 20px;
    height: 140px;
}

.activate {
    position: absolute;
    right: 51px;
    bottom: 10px;
    color: #7d8286;
    font: 10px/14px "Open Sans", sans-serif;
}

.activate p {
    margin: 0;
}

.activate p:first-child {
    font-size: 13px;
    line-height: 16px;
}

.command {
    position: absolute;
    left: 284px;
    right: 282px;
    bottom: 1px;
    height: 16px;
    display: flex;
    align-items: center;
}

.grip {
    width: 4px;
    height: 11px;
    margin-right: 2px;
    background: repeating-linear-gradient(#9aa1a6 0 1px, transparent 1px 2px);
}

.command button + button {
    margin: 0 3px;
}

.command-line {
    flex: 1;
    height: 16px;
    padding: 0 3px 0 2px;
    background-color: rgba(222, 224, 224, 0.82);
    display: flex;
    align-items: center;
    gap: 2px;
}

.command-line input {
    flex: 1;
    padding: 0;
    margin-left: 3px;
    border: none;
    background: none;
    color: #222930;
    font: italic 8px "Liberation Mono", monospace;
}

.command-line input::placeholder {
    color: #5d6266;
    opacity: 1;
}

/* Status Bar */
.statusbar {
    height: 22px;
    background-color: #222930;
    border-top: 2px solid #3b4650;
    display: flex;
    justify-content: space-between;
    align-items: center;
}

.layout-tabs {
    height: 18px;
    padding-left: 10px;
    display: flex;
    align-items: center;
}

.layout-tabs .slant {
    height: 16px;
    margin: 0 8px 0 9px;
    padding: 0 8px;
}

.layout-tabs .slash {
    margin: 0 7px;
}

.layout-tabs .add {
    margin: 0 1px;
}

.status-tools {
    padding-right: 2px;
    display: flex;
}

.status-tools button {
    width: 16px;
    height: 15px;
    justify-content: center;
    background-color: #2d3640;
}

.status-tools .model {
    width: 32px;
    margin-right: 1px;
}

.status-tools .drop {
    width: 13px;
}

.status-tools .on {
    background-color: #4f86b5;
    width: 15px;
}

.status-tools .scale {
    width: 24px;
    gap: 3px;
}

.status-tools .wide {
    margin-left: 1px;
}
```
